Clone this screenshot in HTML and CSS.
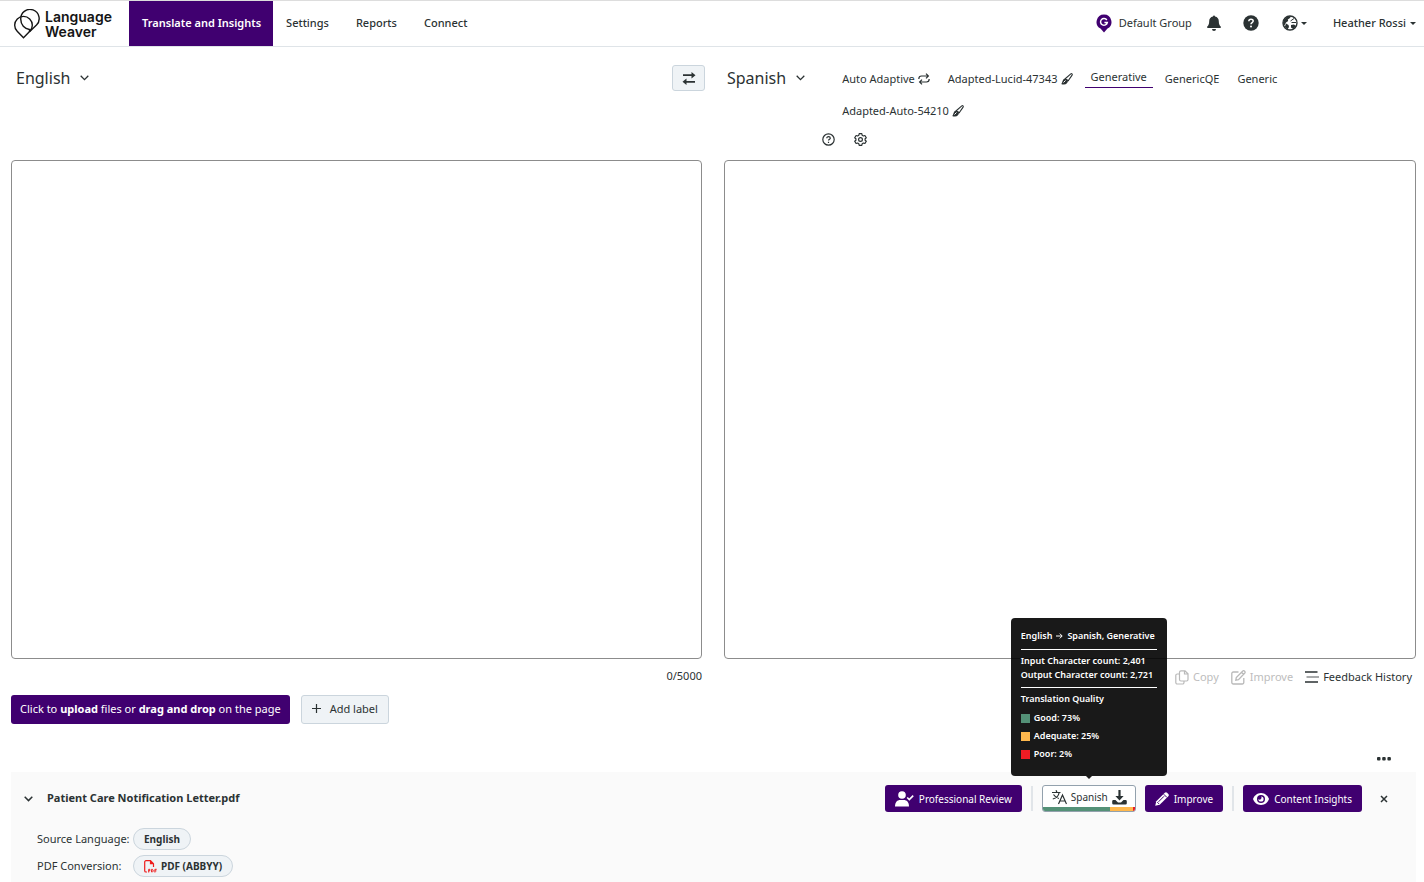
FILE: index.html
```html
<!DOCTYPE html>
<html lang="en">
<head>
<meta charset="utf-8">
<meta name="viewport" content="width=device-width, initial-scale=1">
<title>Language Weaver</title>
<link rel="stylesheet" href="styles.css">
</head>
<body>
<header class="topbar">
  <a class="brand" href="#">
    <svg class="brand-mark" viewBox="0 0 26 30" width="26" height="30" fill="none" stroke="#151515" stroke-width="1.4"><path d="M9.500 28.800 3.200 22.300A8.800 8.800 0 1 1 15.800 22.300Z"/><path d="M15.500 22.800V20.500C10.500 19.800 6.800 16 6.800 10.500A9.200 9.200 0 1 1 22.500 16.100L15.500 22.800"/></svg>
    <span class="brand-name">Language<br>Weaver</span>
  </a>
  <nav class="mainnav">
    <a class="nav-link active" href="#">Translate and Insights</a>
    <a class="nav-link" href="#">Settings</a>
    <a class="nav-link" href="#">Reports</a>
    <a class="nav-link" href="#">Connect</a>
  </nav>
  <div class="account">
    <a class="group" href="#">
      <svg width="16" height="19" viewBox="0 0 16 19"><path fill="#400070" d="M8 .5a7.500 7.500 0 0 1 3.500 14.100L8 18.500l-3.500-3.900A7.500 7.500 0 0 1 8 .5z"/><path d="M10.800 6A3.400 3.400 0 1 0 11.300 8.500H8.400" fill="none" stroke="#fff" stroke-width="1.500"/></svg>
      <span>Default Group</span>
    </a>
    <button class="icon-btn" aria-label="Notifications"><svg width="14" height="16" viewBox="0 0 14 16" fill="#2b3233"><path d="M6 1.500a1 1 0 0 1 2 0c2.500.5 3.800 2.300 3.800 4.800 0 3 .8 4.200 1.900 5.300.5.600.2 1.400-.6 1.400H.9c-.8 0-1.100-.8-.6-1.400C1.400 10.500 2.200 9.300 2.200 6.300 2.200 3.800 3.500 2 6 1.500z"/><path d="M5 14h4a2 2 0 0 1-4 0z"/></svg></button>
    <button class="icon-btn help" aria-label="Help"><svg width="16" height="16" viewBox="0 0 16 16"><circle cx="8" cy="8" r="7.700" fill="#2b3233"/><path d="M5.800 6.200C5.900 4.800 6.800 4.200 8 4.200s2.200.7 2.200 1.900C10.200 7.600 8 7.600 8 9.200" fill="none" stroke="#fff" stroke-width="1.500"/><circle cx="8" cy="11.500" r="1" fill="#fff"/></svg></button>
    <button class="icon-btn lang" aria-label="Interface language"><svg width="16" height="16" viewBox="0 0 16 16"><circle cx="8" cy="8" r="7" fill="#fff" stroke="#2b3233" stroke-width="1.400"/><path fill="#2b3233" d="M2 4.500 5.500 1.500 9 1 8 3 5.800 4.500 6.200 6 4 7.500 2.500 10.500 1 8zM4 8.500 6.500 10 7 12 5.500 14.500 2.800 12zM9 10l3-.5 2 1.500-2.500 3.300L9 12.500z"/><path d="M8.500 6 12 3.500M9.500 7.500H14" stroke="#2b3233" fill="none"/></svg><span class="caret"></span></button>
    <button class="user">Heather Rossi<span class="caret"></span></button>
  </div>
</header>

<main class="page">
  <div class="translator">
    <section class="side">
      <div class="side-head">
        <button class="language">English <svg width="9" height="6" viewBox="0 0 9 6" fill="none" stroke="#2b3233" stroke-width="1.300"><path d="M.7.800 4.500 4.600 8.300.800"/></svg></button>
        <button class="swap" aria-label="Swap languages"><svg width="14" height="13" viewBox="0 0 14 13" fill="#2b3233"><path d="M1 2.300h8.500V0L13.500 3.200 9.500 6.400V4.100H1zM13 8.900H4.500V6.600L.5 9.800l4 3.200v-2.300H13z"/></svg></button>
      </div>
      <textarea class="textbox" aria-label="Source text"></textarea>
      <div class="side-foot"><span class="counter">0/5000</span></div>
    </section>
    <section class="side">
      <div class="side-head">
        <button class="language">Spanish <svg width="9" height="6" viewBox="0 0 9 6" fill="none" stroke="#2b3233" stroke-width="1.300"><path d="M.7.800 4.500 4.600 8.300.800"/></svg></button>
        <div class="model-area">
          <div class="models">
            <button class="model">Auto Adaptive <svg width="12" height="12" viewBox="0 0 12 12" fill="none" stroke="#2b3233" stroke-width="1.200"><path d="M.8 6C.8 4 1.800 3 3.500 3H10M8 .6 10.400 3 8 5.400M11.200 6C11.200 8 10.200 9 8.500 9H2M4 6.600 1.600 9 4 11.400"/></svg></button>
            <button class="model">Adapted-Lucid-47343 <svg width="12" height="12" viewBox="0 0 12 12"><path d="M4.500 5.500 9.800.9c.9-.6 1.800.3 1.300 1.200L7.200 7.800z" fill="none" stroke="#2b3233" stroke-width="1.100"/><path d="M4.400 5.300 7 7.600C7 10 5.500 11.500 3 11.600c-1.300 0-2.200-.2-2.800-.7C1.800 10.200.9 6 4.400 5.300z" fill="#2b3233"/><path d="M2.500 9.500 4.500 7.500" stroke="#fff"/></svg></button>
            <button class="model selected">Generative</button>
            <button class="model">GenericQE</button>
            <button class="model">Generic</button>
            <button class="model">Adapted-Auto-54210 <svg width="12" height="12" viewBox="0 0 12 12"><path d="M4.500 5.500 9.800.9c.9-.6 1.800.3 1.300 1.200L7.200 7.800z" fill="none" stroke="#2b3233" stroke-width="1.100"/><path d="M4.400 5.300 7 7.600C7 10 5.500 11.500 3 11.600c-1.300 0-2.200-.2-2.800-.7C1.800 10.200.9 6 4.400 5.300z" fill="#2b3233"/><path d="M2.500 9.500 4.500 7.500" stroke="#fff"/></svg></button>
          </div>
          <div class="model-tools">
            <button class="icon-btn" aria-label="Model help"><svg width="13" height="13" viewBox="0 0 13 13" fill="none" stroke="#2b3233" stroke-width="1.200"><circle cx="6.500" cy="6.500" r="5.700"/><path d="M4.800 5.200c0-2.200 3.500-2 3.500 0C8.300 6.300 6.500 6.300 6.500 7.600M6.500 8.700v1.200"/></svg></button>
            <button class="icon-btn" aria-label="Model settings"><svg width="13" height="13" viewBox="0 0 13 13" fill="none" stroke="#2b3233" stroke-width="1.200" stroke-linejoin="round"><path d="M5.200.7h2.600l.4 1.600 1.200.7 1.500-.5 1.400 2.300-1.200 1v1.400l1.200 1-1.400 2.300-1.500-.5-1.200.7-.4 1.600H5.200l-.4-1.600L3.600 10l-1.500.5L.7 8.200l1.200-1V5.800l-1.200-1 1.400-2.300 1.500.5 1.200-.7z"/><circle cx="6.500" cy="6.500" r="1.900"/></svg></button>
          </div>
        </div>
      </div>
      <textarea class="textbox" aria-label="Translated text" readonly></textarea>
      <div class="side-foot">
        <button class="tool" disabled><svg width="14" height="15" viewBox="0 0 14 15" fill="none" stroke="#b9b9b9" stroke-width="1.200"><path d="M6 .8h4l3 3V9.500a1.500 1.500 0 0 1-1.500 1.500H6a1.500 1.500 0 0 1-1.500-1.500V2.300A1.500 1.500 0 0 1 6 .8zM9.500.8V4H13M4.500 4H2.300A1.500 1.500 0 0 0 .8 5.500v7A1.500 1.500 0 0 0 2.300 14H7.500A1.500 1.500 0 0 0 9 12.500V11"/></svg>Copy</button>
        <button class="tool" disabled><svg width="15" height="15" viewBox="0 0 15 15" fill="none" stroke="#b9b9b9" stroke-width="1.300"><path d="M7.500 2H2.300A1.500 1.500 0 0 0 .8 3.500v9A1.500 1.500 0 0 0 2.300 14h9a1.500 1.500 0 0 0 1.500-1.500V8"/><path d="M4.800 10.200 5.300 7.500 11.800 1c1.200-1 3 .8 2 2L7.500 9.600zM10.500 2.300l2 2"/></svg>Improve</button>
        <button class="tool"><svg width="14" height="12" viewBox="0 0 14 12" stroke-width="1.500"><path stroke="#2b3233" d="M0 1h12.500M0 11h13"/><path stroke="#8b8e8f" d="M1.500 6H14"/></svg>Feedback History</button>
      </div>
    </section>
  </div>

  <div class="actions">
    <button class="btn btn-primary upload">Click to <b>upload</b> files or <b>drag and drop</b> on the page</button>
    <button class="btn btn-light"><svg width="9" height="9" viewBox="0 0 9 9" stroke="#2b3233" stroke-width="1.200"><path d="M4.500 0v9M0 4.500h9"/></svg>Add label</button>
  </div>

  <div class="list-tools">
    <button class="icon-btn" aria-label="More options"><svg width="14" height="4" viewBox="0 0 14 4" fill="#2b3233"><rect width="3.500" height="3.500" rx="1"/><rect x="5.200" width="3.500" height="3.500" rx="1"/><rect x="10.400" width="3.500" height="3.500" rx="1"/></svg></button>
  </div>

  <article class="file">
    <div class="file-head">
      <button class="icon-btn" aria-label="Collapse"><svg width="9" height="6" viewBox="0 0 9 6" fill="none" stroke="#2b3233" stroke-width="1.500"><path d="M.7.800 4.500 4.600 8.300.800"/></svg></button>
      <h2 class="file-name">Patient Care Notification Letter.pdf</h2>
      <div class="file-actions">
        <button class="btn btn-primary compact review"><svg width="19" height="16" viewBox="0 0 19 16" fill="#fff"><circle cx="7" cy="4" r="3.800"/><path d="M0 15.500C0 11 2.500 9 5 9h4c2.500 0 5 2 5 6.500z"/><path d="M12.200 6.500 14.300 8.600 18.200 4.600" fill="none" stroke="#fff" stroke-width="1.600"/></svg>Professional Review</button>
        <span class="divider"></span>
        <div class="result">
          <button class="btn result-btn">
            <svg width="15" height="15" viewBox="0 0 15 15" fill="none" stroke="#2b3233" stroke-width="1.200"><path d="M0 2.500h8.500M4 .3 5 2.500M1.500 4.500C3 7 5 8 7 8.500M7 3C6.500 6 4 8.200.8 9M6.500 14 10.500 5l4 9M8 11h5"/></svg>
            <span>Spanish</span>
            <svg width="15" height="15" viewBox="0 0 15 15" fill="#2b3233"><path d="M6.400 0h2.200v6h3L7.500 10.500 3.400 6h3z"/><path d="M1.500 10h2l2.500 2.500h3L11.500 10h2A1.300 1.300 0 0 1 14.800 11.300v1.900a1.300 1.300 0 0 1-1.300 1.300h-12A1.300 1.300 0 0 1 .2 13.200v-1.900A1.300 1.300 0 0 1 1.500 10z"/></svg>
            <span class="quality"><span class="good" style="width:73%"></span><span class="adequate" style="width:25%"></span><span class="poor" style="width:2%"></span></span>
          </button>
          <div class="tooltip" role="tooltip">
            <p class="tip-title">English <svg width="7" height="6" viewBox="0 0 7 6" fill="none" stroke="#fff"><path d="M0 3h6M3.800.6 6.200 3 3.800 5.400"/></svg> Spanish, Generative</p>
            <p class="tip-counts">Input Character count: 2,401<br>Output Character count: 2,721</p>
            <p class="tip-heading">Translation Quality</p>
            <ul class="legend">
              <li><span class="swatch good"></span>Good: 73%</li>
              <li><span class="swatch adequate"></span>Adequate: 25%</li>
              <li><span class="swatch poor"></span>Poor: 2%</li>
            </ul>
          </div>
        </div>
        <button class="btn btn-primary compact improve"><svg width="14" height="14" viewBox="0 0 14 14"><path fill="#fff" d="M.2 13.800 1.300 9.300 9.800.8a1.700 1.700 0 0 1 2.300 0l1.200 1.200a1.700 1.700 0 0 1 0 2.300L4.700 12.800z"/><path d="M3.500 9.800 9 4.300M8.700 2.200l3.200 3.200M2.300 10.200l1.700 1.700" stroke="#400070" fill="none"/></svg>Improve</button>
        <span class="divider"></span>
        <button class="btn btn-primary compact"><svg width="16" height="12" viewBox="0 0 16 12"><path fill="#fff" d="M8 0c4 0 7 3 8 6-1 3-4 6-8 6S1 9 0 6c1-3 4-6 8-6z"/><circle cx="8" cy="6" r="4" fill="#400070"/><path d="M8 3.400A2.600 2.600 0 1 1 5.400 6 1.800 1.800 0 0 0 8 3.400z" fill="#fff"/></svg>Content Insights</button>
      </div>
      <button class="icon-btn close" aria-label="Remove file"><svg width="8" height="8" viewBox="0 0 8 8" stroke="#2b3233" stroke-width="1.500"><path d="M1 1l6 6M7 1 1 7"/></svg></button>
    </div>
    <dl class="meta">
      <dt>Source Language:</dt><dd><span class="chip">English</span></dd>
      <dt>PDF Conversion:</dt><dd><span class="chip"><svg width="13" height="13" viewBox="0 0 13 13" fill="none" stroke="#ee1c1c"><path d="M3 12H2A1.300 1.300 0 0 1 .7 10.700V2A1.300 1.300 0 0 1 2 .7h4.500l3 3V7M6.500.7v3h3" stroke-width="1.200"/><path d="M4.700 12.500V9.300h1.100v1.500H4.700M7.600 9.300v2.700h.8l.7-.7v-1.300l-.7-.7zM10.900 12.500V9.300h1.800M10.900 10.900h1.500"/></svg>PDF (ABBYY)</span></dd>
    </dl>
  </article>
</main>
</body>
</html>
```
FILE: styles.css
```css
* { box-sizing: border-box; }

body {
  margin: 0;
  min-height: 100vh;
  display: flex;
  flex-direction: column;
  background: #fff;
  color: #2b3233;
  font: 11px/16px "Noto Sans", sans-serif;
}

button {
  font: inherit;
  color: inherit;
  background: none;
  border: 0;
  padding: 0;
  display: inline-flex;
  align-items: center;
  white-space: nowrap;
  cursor: pointer;
}

a { color: inherit; text-decoration: none; }
svg { flex: none; display: block; }

.topbar {
  display: flex;
  height: 47px;
  border-top: 1px solid #ddd;
  border-bottom: 1px solid #dfe4e8;
}

.brand {
  display: flex;
  align-items: center;
  gap: 5px;
  width: 129px;
  padding-left: 14px;
}

.brand-name {
  color: #151515;
  font: 600 14px/15px Inter, sans-serif;
}

.mainnav { display: flex; }

.nav-link {
  display: flex;
  align-items: center;
  padding: 0 14px 2px 13px;
  font-weight: 500;
}

.nav-link.active {
  padding-right: 12px;
  background: #400070;
  color: #fff;
  font-weight: 600;
}

.account {
  display: flex;
  align-items: center;
  margin-left: auto;
  padding: 0 8px 1px 0;
}

.group {
  display: flex;
  align-items: center;
  gap: 7px;
  margin-right: 15px;
}

.help { margin: 0 23px 0 22px; }
.lang { margin-right: 26px; gap: 3px; }
.user { font-weight: 500; gap: 4px; }

.caret {
  border: 3px solid transparent;
  border-top-color: currentColor;
  border-bottom: 0;
}

.page {
  flex: 1;
  display: flex;
  flex-direction: column;
  padding: 0 8px 0 11px;
}

.translator {
  display: grid;
  grid-template-columns: 691fr 692fr;
  gap: 22px;
}

.side { display: flex; flex-direction: column; min-width: 0; }

.side-head {
  display: flex;
  align-items: flex-start;
  min-height: 113px;
  padding-top: 18px;
}

.language {
  gap: 10px;
  height: 26px;
  padding-left: 5px;
  font-size: 16px;
  line-height: 24px;
}

.side + .side .language { padding-left: 3px; }

.swap {
  justify-content: center;
  width: 33px;
  height: 26px;
  margin: 0 -3px 0 auto;
  background: #eff3f6;
  border: 1px solid #cbd5dd;
  border-radius: 3px;
}

.model-area { flex: 1; margin-left: 17px; }

.models {
  display: flex;
  flex-wrap: wrap;
  gap: 8px 6px;
  max-width: 490px;
  padding-left: 14px;
}

.model { height: 24px; padding: 4px 6px 0; gap: 3px; }

.model.selected {
  height: 23px;
  padding-top: 2px;
  border-bottom: 1px solid #400070;
}

.model-tools { display: flex; gap: 19px; margin-top: 12px; }

.textbox {
  width: 100%;
  height: 499px;
  padding: 12px;
  border: 1px solid #8c8c8c;
  border-radius: 4px;
  font: inherit;
  resize: none;
}

.side-foot {
  display: flex;
  justify-content: flex-end;
  gap: 12px;
  height: 36px;
  padding-top: 9px;
}

.side + .side .side-foot { padding-right: 4px; }

.tool { gap: 4px; height: 18px; }
.tool:disabled { color: #bdbdbd; cursor: default; }

.actions { display: flex; gap: 11px; }

.btn {
  height: 29px;
  padding: 0 10px 2px;
  border-radius: 3px;
}

.btn b { font-weight: 700; }
.btn-primary { background: #400070; color: #fff; white-space: pre; }
.upload { padding: 0 9px 2px; }
.btn-light { gap: 9px; background: #eff3f6; border: 1px solid #cbd5dd; }

.list-tools {
  display: flex;
  justify-content: flex-end;
  align-items: center;
  height: 48px;
  padding: 22px 25px 0 0;
}

.file {
  flex: 1;
  padding: 13px 28px 4px 13px;
  background: #fafafa;
}

.file-head { display: flex; align-items: center; }

.file-name {
  margin: 0 0 0 14px;
  padding-bottom: 2px;
  font-size: 11px;
  font-weight: 700;
}

.file-actions {
  display: flex;
  align-items: center;
  margin-left: auto;
}

.compact { height: 27px; gap: 5px; padding: 0 10px; font-size: 10px; }
.improve { margin-left: 9px; }

.divider {
  width: 2px;
  height: 25px;
  margin: 0 9px;
  background: #e1e5e9;
}

.close { margin-left: 18px; }

.result { position: relative; }

.result-btn {
  position: relative;
  gap: 4px;
  height: 27px;
  padding: 0 8px 3px 9px;
  background: #fff;
  border: 1px solid #93a1ad;
  font-size: 10px;
  overflow: hidden;
}

.quality {
  position: absolute;
  inset: auto 0 0 0;
  display: flex;
  height: 4px;
}

.good { background: #549177; }
.adequate { background: #ffb84d; }
.poor { background: #ed1c24; }

.tooltip {
  position: absolute;
  bottom: calc(100% + 9px);
  left: 50%;
  transform: translateX(-50%);
  width: 156px;
  padding: 11px 10px 13px;
  border-radius: 4px;
  background: rgba(0, 0, 0, 0.9);
  color: #fff;
  font-size: 9px;
  font-weight: 600;
  line-height: 14px;
  white-space: nowrap;
}

.tooltip::after {
  content: "";
  position: absolute;
  top: 100%;
  left: 50%;
  margin-left: -3px;
  border: 3px solid transparent;
  border-top-color: rgba(0, 0, 0, 0.9);
  border-bottom: 0;
}

.tooltip p { margin: 0; }
.tooltip .tip-title { display: flex; align-items: center; gap: 4px; padding-bottom: 6px; }
.tip-counts { border: solid #fff; border-width: 1px 0; }
.tooltip .tip-counts { padding: 4px 0 5px; }
.tooltip .tip-heading { padding: 4px 0 3px; }

.legend { list-style: none; margin: 0; padding: 0; }
.legend li { display: flex; align-items: center; gap: 4px; height: 18px; }
.swatch { width: 9px; height: 9px; }

.meta {
  display: grid;
  grid-template-columns: 96px 1fr;
  row-gap: 5px;
  align-items: center;
  margin: 16px 0 0 13px;
}

.meta dd { margin: 0; display: flex; }

.chip {
  display: inline-flex;
  align-items: center;
  gap: 4px;
  height: 22px;
  padding: 0 10px;
  border: 1px solid #cbd5dd;
  border-radius: 11px;
  background: #eff3f6;
  font-size: 10px;
  font-weight: 700;
}
```
